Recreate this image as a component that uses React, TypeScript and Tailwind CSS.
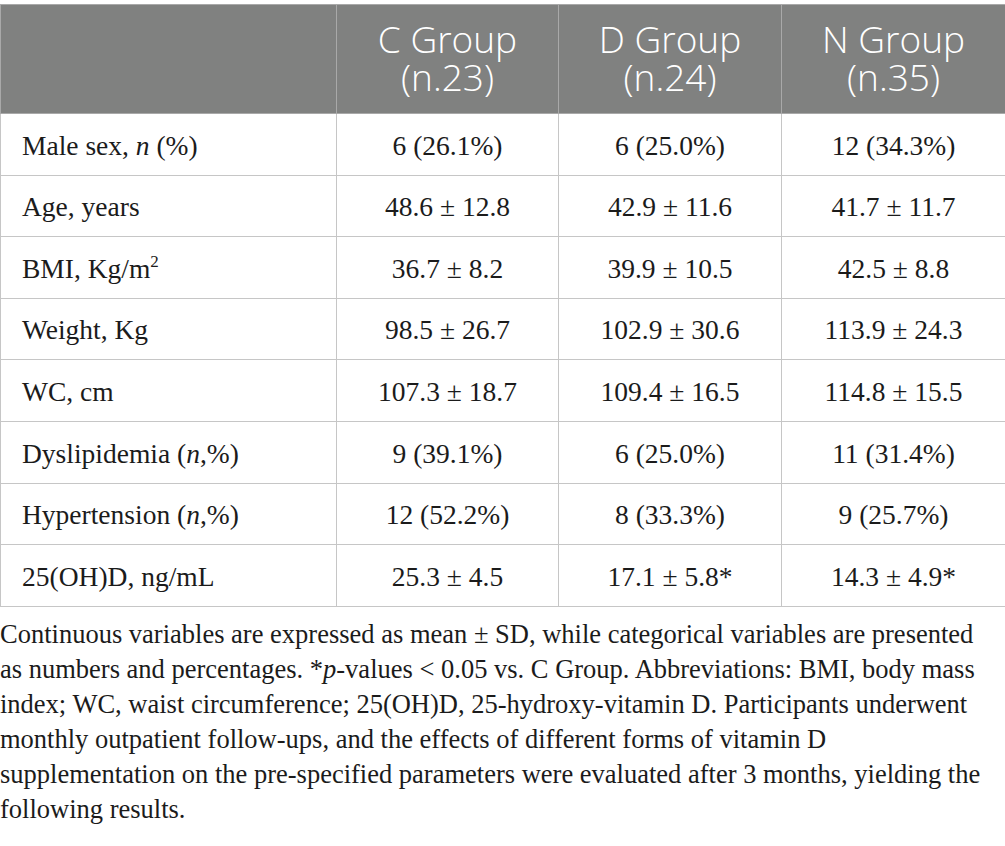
const rows: { label: React.ReactNode; c: string; d: string; n: string }[] = [
  { label: <>Male sex, <i>n</i> (%)</>, c: "6 (26.1%)", d: "6 (25.0%)", n: "12 (34.3%)" },
  { label: "Age, years", c: "48.6 ± 12.8", d: "42.9 ± 11.6", n: "41.7 ± 11.7" },
  { label: <>BMI, Kg/m<sup className="text-[17px] -top-[11px]">2</sup></>, c: "36.7 ± 8.2", d: "39.9 ± 10.5", n: "42.5 ± 8.8" },
  { label: "Weight, Kg", c: "98.5 ± 26.7", d: "102.9 ± 30.6", n: "113.9 ± 24.3" },
  { label: "WC, cm", c: "107.3 ± 18.7", d: "109.4 ± 16.5", n: "114.8 ± 15.5" },
  { label: <>Dyslipidemia (<i>n</i>,%)</>, c: "9 (39.1%)", d: "6 (25.0%)", n: "11 (31.4%)" },
  { label: <>Hypertension (<i>n</i>,%)</>, c: "12 (52.2%)", d: "8 (33.3%)", n: "9 (25.7%)" },
  { label: "25(OH)D, ng/mL", c: "25.3 ± 4.5", d: "17.1 ± 5.8*", n: "14.3 ± 4.9*" },
];

const groups = [
  { name: "C Group", n: "(n.23)" },
  { name: "D Group", n: "(n.24)" },
  { name: "N Group", n: "(n.35)" },
];

export default function App() {
  return (
    <div className="w-[1005px] bg-white pt-[4px] text-[#1b1b1b]">
      <table className="w-[1005px] table-fixed border-collapse border border-[#c6c6c6]">
        <colgroup>
          <col className="w-[336px]" />
          <col className="w-[222px]" />
          <col className="w-[223px]" />
          <col className="w-[224px]" />
        </colgroup>
        <thead>
          <tr className="h-[109px] bg-[#808180]">
            <th className="border border-[#a9a9a9]"></th>
            {groups.map((g) => (
              <th
                key={g.name}
                className="border border-[#a9a9a9] text-center font-light text-white text-[37px] leading-[38px] font-['Open_Sans',sans-serif] pb-[2px]"
              >
                <div>{g.name}</div>
                <div>{g.n}</div>
              </th>
            ))}
          </tr>
        </thead>
        <tbody className="font-['Liberation_Serif',serif] text-[27.5px]">
          {rows.map((r, i) => (
            <tr key={i} className="h-[61.6px]">
              <td className="border border-[#c6c6c6] pl-[21px] pt-[2px]">{r.label}</td>
              <td className="border border-[#c6c6c6] text-center pt-[2px]">{r.c}</td>
              <td className="border border-[#c6c6c6] text-center pt-[2px]">{r.d}</td>
              <td className="border border-[#c6c6c6] text-center pt-[2px]">{r.n}</td>
            </tr>
          ))}
        </tbody>
      </table>
      <p className="mt-[10px] whitespace-nowrap font-['Liberation_Serif',serif] text-[26.5px] leading-[35px]">
        Continuous variables are expressed as mean ± SD, while categorical variables are presented
        <br />
        as numbers and percentages. *<i>p</i>-values &lt; 0.05 vs. C Group. Abbreviations: BMI, body mass
        <br />
        index; WC, waist circumference; 25(OH)D, 25-hydroxy-vitamin D. Participants underwent
        <br />
        monthly outpatient follow-ups, and the effects of different forms of vitamin D
        <br />
        supplementation on the pre-specified parameters were evaluated after 3 months, yielding the
        <br />
        following results.
      </p>
    </div>
  );
}
